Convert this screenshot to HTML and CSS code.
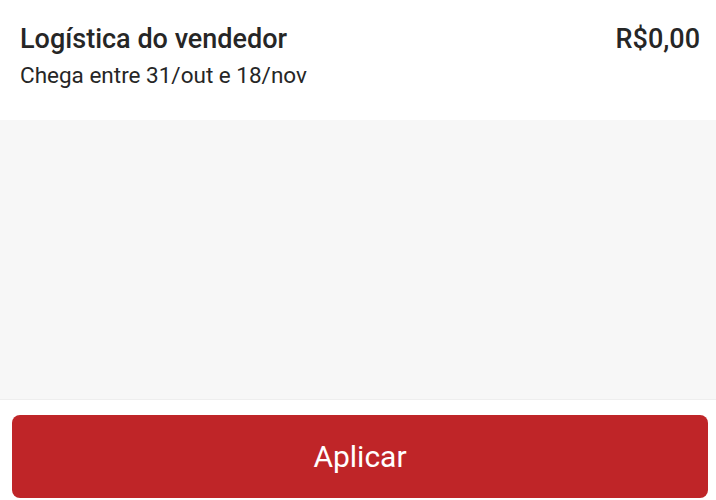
FILE: index.html
```html
<!DOCTYPE html>
<html lang="pt-BR">

<head>
    <meta charset="UTF-8">
    <meta name="viewport" content="width=device-width, initial-scale=1.0">
    <title>Frete</title>
    <link rel="stylesheet" href="styles.css">
</head>

<body>
    <div class="sheet">
        <!-- Shipping option -->
        <div class="option">
            <div class="option-row">
                <span class="option-title">Logística do vendedor</span>
                <span class="option-price">R$0,00</span>
            </div>
            <p class="option-eta">Chega entre 31/out e 18/nov</p>
        </div>

        <!-- Empty area -->
        <div class="filler"></div>

        <!-- Footer with apply button -->
        <div class="footer">
            <button type="button" class="apply-button">Aplicar</button>
        </div>
    </div>
</body>

</html>
```

FILE: styles.css
```css
body {
    font-family: 'Roboto', 'Noto Sans', sans-serif;
    margin: 0;
    padding: 0;
    background-color: #fff;
}

.sheet {
    display: flex;
    flex-direction: column;
    height: 500px;
}

.option {
    height: 120px;
    box-sizing: border-box;
    padding: 22px 16px 0 20px;
    background-color: #fff;
}

.option-row {
    display: flex;
    justify-content: space-between;
    align-items: baseline;
}

.option-title,
.option-price {
    font-size: 27px;
    font-weight: 500;
    color: #262626;
    line-height: 34px;
}

.option-eta {
    margin: 4px 0 0;
    font-size: 22.5px;
    color: #262626;
    line-height: 30px;
}

.filler {
    height: 279px;
    background-color: #f7f7f7;
}

.footer {
    flex: 1;
    padding: 15px 8px 2px 12px;
    border-top: 1px solid #eeeeee;
    display: flex;
}

.apply-button {
    flex: 1;
    border: none;
    border-radius: 8px;
    background-color: #bf2528;
    color: #fff;
    font-family: 'Roboto', 'Noto Sans', sans-serif;
    font-size: 30px;
    cursor: pointer;
}
```
